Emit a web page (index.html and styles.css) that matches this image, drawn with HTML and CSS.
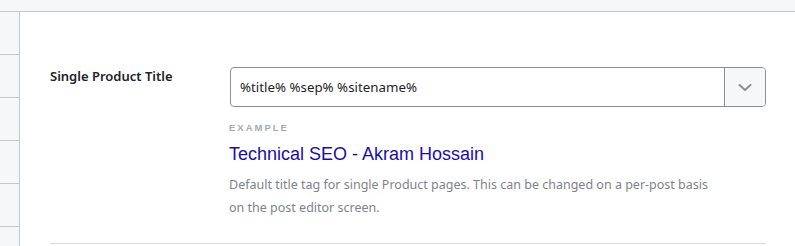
FILE: index.html
```html
<!DOCTYPE html>
<html lang="en">
<head>
    <meta charset="UTF-8">
    <title>Titles &amp; Meta</title>
    <link rel="stylesheet" href="styles.css">
</head>
<body>
    <div class="topbar"></div>
    <div class="layout">
        <div class="sidebar">
            <div class="side-item"></div>
            <div class="side-item"></div>
            <div class="side-item"></div>
            <div class="side-item"></div>
            <div class="side-item"></div>
        </div>
        <div class="content">
            <div class="field-row">
                <div class="field-label">Single Product Title</div>
                <div class="field-body">
                    <div class="select-box">
                        <div class="select-value">%title% %sep% %sitename%</div>
                        <div class="select-toggle">
                            <svg width="14" height="9" viewBox="0 0 14 9">
                                <path d="M1.5 2 L7 7 L12.5 2" fill="none" stroke="#8c8f94" stroke-width="2" stroke-linecap="round" stroke-linejoin="round"/>
                            </svg>
                        </div>
                    </div>
                    <div class="example-label">Example</div>
                    <div class="example-title">Technical SEO - Akram Hossain</div>
                    <div class="field-desc">Default title tag for single Product pages. This can be changed on a per-post basis on the post editor screen.</div>
                </div>
            </div>
        </div>
    </div>
</body>
</html>
```

FILE: styles.css
```css
body {
    margin: 0;
    font-family: 'Noto Sans', 'Open Sans', sans-serif;
    background-color: #fff;
    color: #1d2327;
    overflow: hidden;
}
.topbar {
    height: 11px;
    background-color: #f6f7f9;
    border-bottom: 1px solid #c3c8d0;
}
.layout {
    display: flex;
    height: 234px;
}
.sidebar {
    width: 19px;
    flex-shrink: 0;
    background-color: #f6f7f9;
    border-right: 1px solid #c3c8d0;
}
.side-item {
    height: 42px;
    border-bottom: 1px solid #c3c8d0;
}
.content {
    flex: 1;
    padding: 0 29px 0 30px;
}
.field-row {
    display: flex;
    padding-top: 55px;
    padding-bottom: 24px;
    border-bottom: 1px solid #dcdcde;
}
.field-label {
    width: 180px;
    flex-shrink: 0;
    font-size: 13px;
    font-weight: 600;
    line-height: 18px;
    color: #1d2327;
}
.field-body {
    flex: 1;
}
.select-box {
    display: flex;
    height: 38px;
    border: 1px solid #8c8f94;
    border-radius: 4px;
    overflow: hidden;
}
.select-value {
    flex: 1;
    padding-left: 9px;
    font-size: 13.3px;
    line-height: 38px;
    color: #1d2327;
}
.select-toggle {
    width: 40px;
    border-left: 1px solid #8c8f94;
    background-color: #f6f7f9;
    display: flex;
    justify-content: center;
    align-items: center;
}
.example-label {
    margin: 15px 0 0 -1px;
    font-family: 'Liberation Sans', Arial, sans-serif;
    font-size: 9.5px;
    font-weight: bold;
    letter-spacing: 2px;
    text-transform: uppercase;
    color: #a7aaad;
    line-height: 12px;
}
.example-title {
    margin: 8px 0 0 -1px;
    font-family: 'Liberation Sans', Arial, sans-serif;
    font-size: 18px;
    line-height: 24px;
    color: #1a0dab;
}
.field-desc {
    margin: 7px 0 0 -1px;
    font-size: 12.5px;
    line-height: 23px;
    color: #80838a;
    max-width: 480px;
}
```
